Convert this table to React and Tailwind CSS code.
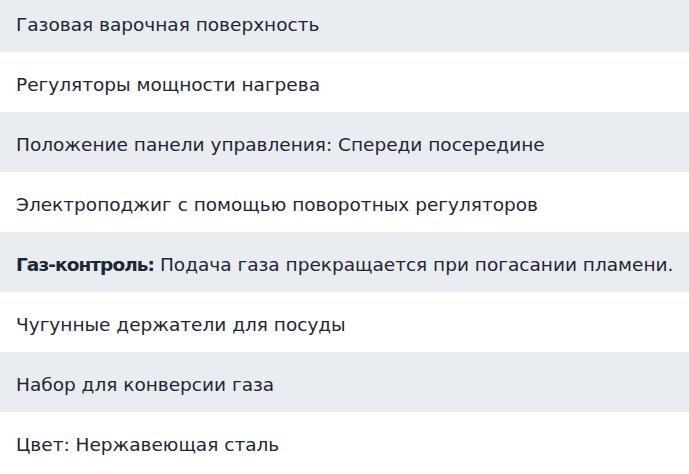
import React from "react";

const rows = [
  { text: "Газовая варочная поверхность" },
  { text: "Регуляторы мощности нагрева" },
  { text: "Положение панели управления: Спереди посередине" },
  { text: "Электроподжиг с помощью поворотных регуляторов" },
  { label: "Газ-контроль:", text: " Подача газа прекращается при погасании пламени." },
  { text: "Чугунные держатели для посуды" },
  { text: "Набор для конверсии газа" },
  { text: "Цвет: Нержавеющая сталь" },
];

export default function App() {
  return (
    <div className="w-[689px] h-[474px] overflow-hidden bg-white font-['DejaVu_Sans',sans-serif] text-[18.5px] text-[#1d2634]">
      <ul className="-mt-2">
        {rows.map((row, i) => (
          <li
            key={i}
            className={`h-[60px] flex items-center px-4 pt-[6px] ${i % 2 === 0 ? "bg-[#e9ecf0]" : "bg-white"}`}
          >
            <span className="whitespace-nowrap">
              {row.label && <strong className="font-bold tracking-[-0.05em]">{row.label}</strong>}
              {row.text}
            </span>
          </li>
        ))}
      </ul>
    </div>
  );
}
